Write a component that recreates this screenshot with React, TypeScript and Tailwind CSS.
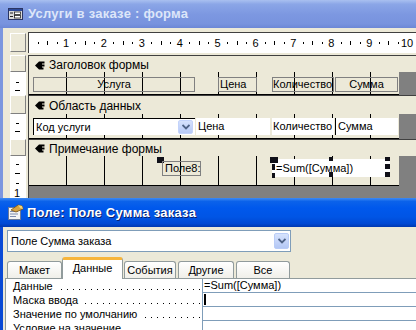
import React from 'react';

const ui = "font-['Liberation_Sans',Arial,sans-serif]";
const CM = 37.9;

function FormIcon() {
  return (
    <svg width="15" height="12" viewBox="0 0 15 12">
      <rect x="0.5" y="0.5" width="14" height="11" fill="#d9d9d9" stroke="#2b3563" />
      <rect x="1" y="1" width="13" height="2" fill="#2c4a9c" />
      <rect x="2" y="4.5" width="3" height="1" fill="#222" />
      <rect x="6.5" y="4" width="6" height="2.5" fill="#fff" stroke="#222" strokeWidth="0.8" />
      <rect x="2" y="8" width="3" height="1" fill="#222" />
      <rect x="6.5" y="7.5" width="6" height="2.5" fill="#fff" stroke="#222" strokeWidth="0.8" />
    </svg>
  );
}

function PropIcon() {
  return (
    <svg width="17" height="17" viewBox="0 0 17 17">
      <rect x="1.5" y="3.5" width="12" height="12" fill="#f4f4f4" stroke="#6b7a99" />
      <rect x="3" y="7" width="8" height="1" fill="#7d8cb0" />
      <rect x="3" y="9.5" width="8" height="1" fill="#7d8cb0" />
      <rect x="3" y="12" width="6" height="1" fill="#7d8cb0" />
      <path d="M4 6 L11 1 L15 2 L16 5 L9 8 Z" fill="#d9a441" stroke="#7a5418" strokeWidth="0.8" />
      <path d="M11 1 L15 2 L16 5 L13 4 Z" fill="#f5d67a" />
    </svg>
  );
}

function BarGlyph() {
  return (
    <svg width="10" height="9" viewBox="0 0 10 9">
      <path d="M0 4.5 L4 0.5 H9.5 V2.5 H7 V3.5 H9.5 V5.5 H7 V6.5 H8.5 V8.5 H4 Z" fill="#000" />
    </svg>
  );
}

function TopRuler() {
  const marks: { x: number; kind: 'dot' | 'line' | 'num'; n?: number }[] = [];
  for (let q = 1; q <= 43; q++) {
    const x = 28.1 + (q * CM) / 4 - 29;
    const r = q % 4;
    if (r === 0) marks.push({ x, kind: 'num', n: q / 4 });
    else if (r === 2) marks.push({ x, kind: 'line' });
    else marks.push({ x, kind: 'dot' });
  }
  return (
    <div className="relative flex-1 h-full bg-white border-t border-[#404040]">
      {marks.map((m, i) =>
        m.kind === 'num' ? (
          <span
            key={i}
            className="absolute top-[5px] -translate-x-1/2 text-[11px] leading-none"
            style={{ left: m.x }}
          >
            {m.n}
          </span>
        ) : m.kind === 'line' ? (
          <span key={i} className="absolute top-[8px] w-px h-[4px] bg-black" style={{ left: m.x }} />
        ) : (
          <span key={i} className="absolute top-[9px] w-px h-[2px] bg-black" style={{ left: m.x }} />
        )
      )}
    </div>
  );
}

type Tick = { y: number; kind: 'dot' | 'line' | 'num' };

function Gutter({ box, ticks = [] }: { box?: boolean; ticks?: Tick[] }) {
  return (
    <div className="w-[26px] shrink-0 self-stretch flex pl-[7px] border-r border-[#404040]">
      {box ? (
        <div className="w-[16px] border border-t-white border-l-white border-r-[#808080] border-b-[#808080] bg-[#ece9d8]" />
      ) : (
        <div className="relative w-[16px] bg-white">
          {ticks.map((t, i) =>
            t.kind === 'num' ? (
              <span key={i} className="absolute left-[4px] text-[11px] leading-none" style={{ top: t.y - 5 }}>
                1
              </span>
            ) : (
              <span
                key={i}
                className={`absolute h-px bg-black ${t.kind === 'dot' ? 'left-[6px] w-[3px]' : 'left-[5px] w-[5px]'}`}
                style={{ top: t.y }}
              />
            )
          )}
        </div>
      )}
    </div>
  );
}

function SectionBar({ title, h, pt }: { title: string; h: string; pt: string }) {
  return (
    <div className={`flex ${h}`}>
      <Gutter box />
      <div className={`flex-1 flex items-center gap-[4px] pl-[6px] border-t border-[#404040] bg-[#ece9d8] ${pt}`}>
        <BarGlyph />
        <span className="text-[12px] leading-none">{title}</span>
      </div>
    </div>
  );
}

const grid =
  'relative w-[370px] h-full bg-[#ece9d8] bg-[repeating-linear-gradient(to_right,transparent_0px,transparent_37px,#000_37px,#000_38px)] border-b border-black';

function Handle({ c }: { c: string }) {
  return <span className={`absolute bg-[#101018] ${c}`} />;
}

function FormWindow() {
  const tick = (a: number): Tick[] => [
    { y: a, kind: 'dot' },
    { y: a + 8, kind: 'line' },
  ];
  return (
    <div className="h-[198px] flex flex-col">
      <div className="h-[28px] shrink-0 flex items-center pl-[8px] gap-[5px] bg-[linear-gradient(to_bottom,#a9c0f0_0%,#8ba6e7_15%,#7d98e1_50%,#7893de_85%,#6c87d6_100%)]">
        <FormIcon />
        <span className="text-[13px] font-bold text-[#dde6f9] tracking-[0.25px]">Услуги в заказе : форма</span>
      </div>
      <div className="flex-1 flex flex-col border-l-[3px] border-[#7b96df] pt-[4px]">
        {/* ruler */}
        <div className="flex h-[21px]">
          <div className="w-[25px] shrink-0 pl-[7px] pt-px">
            <div className="w-[16px] h-[19px] border border-t-white border-l-white border-r-[#808080] border-b-[#808080] bg-[#ece9d8]" />
          </div>
          <div className="w-px bg-[#404040]" />
          <TopRuler />
        </div>
        <div className="h-[2px]" />

        <SectionBar title="Заголовок формы" h="h-[17px]" pt="pt-[2px]" />
        <div className="flex h-[23px]">
          <Gutter ticks={tick(10)} />
          <div className={grid}>
            <div className="absolute left-[4px] top-[5px] w-[162px] h-[15px] border border-[#808080] flex items-center justify-center leading-none">
              Услуга
            </div>
            <div className="absolute left-[189px] top-[5px] w-[39px] h-[15px] border border-[#808080] flex items-center pl-[1px] leading-none">
              Цена
            </div>
            <div className="absolute left-[243px] top-[5px] w-[62px] h-[15px] border border-[#808080] flex items-center leading-none">
              Количество
            </div>
            <div className="absolute left-[306px] top-[5px] w-[63px] h-[15px] border border-[#808080] flex items-center justify-center leading-none">
              Сумма
            </div>
          </div>
          <div className="flex-1 bg-[#808080]" />
        </div>

        <SectionBar title="Область данных" h="h-[19px]" pt="pt-px" />
        <div className="flex h-[25px]">
          <Gutter ticks={tick(9)} />
          <div className={grid}>
            <div className="absolute left-[4px] top-[4px] w-[162px] h-[17px] bg-white border-l border-t border-black flex items-center pl-[2px] leading-none">
              Код услуги
              <span className="absolute right-[2px] top-[1px] w-[15px] h-[14px] rounded-[2px] bg-[linear-gradient(to_bottom,#d5e1fc,#b6c9f6)] border border-[#c3d3fb] flex items-center justify-center">
                <svg width="8" height="6" viewBox="0 0 8 6">
                  <path d="M0.5 1 L4 4.5 L7.5 1" fill="none" stroke="#4d6185" strokeWidth="1.8" />
                </svg>
              </span>
            </div>
            <div className="absolute left-[167px] top-[4px] w-[74px] h-[17px] bg-white flex items-center pl-[2px] leading-none">
              Цена
            </div>
            <div className="absolute left-[243px] top-[4px] w-[62px] h-[17px] bg-white flex items-center pl-px leading-none">
              Количество
            </div>
            <div className="absolute left-[306px] top-[4px] w-[63px] h-[17px] bg-white border-l border-black flex items-center pl-[2px] leading-none">
              Сумма
            </div>
          </div>
          <div className="flex-1 bg-[#808080]" />
        </div>

        <SectionBar title="Примечание формы" h="h-[17px]" pt="pt-px" />
        <div className="flex h-[42px]">
          <Gutter
            ticks={[
              { y: 8, kind: 'dot' },
              { y: 17, kind: 'line' },
              { y: 27, kind: 'dot' },
              { y: 37, kind: 'num' },
            ]}
          />
          <div className="flex-1 flex flex-col">
            <div className="flex h-[30px]">
              <div className={grid}>
                <Handle c="left-[128px] top-px w-[7px] h-[6px]" />
                <div className="absolute left-[133px] top-[5px] w-[39px] h-[15px] border border-[#808080] flex items-center pl-[2px] leading-none">
                  Поле8:
                </div>
                <div className="absolute left-[243px] top-[3px] w-[118px] h-[18px] bg-white flex items-center pl-[4px] leading-none">
                  =Sum([Сумма])
                </div>
                <Handle c="left-[241px] top-px w-[8px] h-[6px]" />
                <Handle c="left-[300px] top-px w-[4px] h-[4px]" />
                <Handle c="left-[356px] top-px w-[5px] h-[4px]" />
                <Handle c="left-[243px] top-[8px] w-[3px] h-[6px]" />
                <Handle c="left-[356px] top-[8px] w-[5px] h-[5px]" />
                <Handle c="left-[243px] top-[17px] w-[3px] h-[5px]" />
                <Handle c="left-[300px] top-[16px] w-[4px] h-[5px]" />
                <Handle c="left-[356px] top-[16px] w-[5px] h-[5px]" />
              </div>
              <div className="flex-1 bg-[#808080]" />
            </div>
            <div className="flex-1 bg-[#808080]" />
          </div>
        </div>
      </div>
    </div>
  );
}

const props = ['Данные', 'Маска ввода', 'Значение по умолчанию', 'Условие на значение'];

function PropertyWindow() {
  const tab =
    'h-[17px] flex items-center justify-center border border-b-0 border-[#919b9c] rounded-t-[3px] bg-[linear-gradient(to_bottom,#ffffff,#f0efe9)] leading-none';
  return (
    <div className="h-[132px] flex flex-col">
      <div className="h-[29px] shrink-0 flex items-center pl-[7px] gap-[3px] bg-[linear-gradient(to_bottom,#3d8af4_0%,#0b62ea_12%,#0058ec_35%,#0055e5_65%,#0049d4_88%,#0038b0_100%)]">
        <PropIcon />
        <span className="text-[13px] font-bold text-white tracking-[0.25px] [text-shadow:1px_1px_0_#0a1f6e]">
          Поле: Поле Сумма заказа
        </span>
      </div>
      <div className="flex-1 flex flex-col border-l-[3px] border-[#0a4ad6] bg-[#ece9d8] pt-[3px]">
        <div className="ml-[4px] w-[284px] h-[22px] shrink-0 bg-white border border-[#7f9db9] flex items-center justify-between pl-[3px] pr-px">
          <span className="leading-none">Поле Сумма заказа</span>
          <span className="w-[15px] h-[16px] rounded-[2px] bg-[linear-gradient(to_bottom,#d7e3fd,#b3c7f5)] border border-[#b9ccf7] flex items-center justify-center">
            <svg width="8" height="6" viewBox="0 0 8 6">
              <path d="M0.5 1 L4 4.5 L7.5 1" fill="none" stroke="#4d6185" strokeWidth="1.8" />
            </svg>
          </span>
        </div>
        <div className="flex items-end h-[21px] mt-[5px] ml-[4px] shrink-0">
          <div className={`${tab} w-[55px]`}>Макет</div>
          <div className="relative z-10 -mb-px w-[61px] h-[22px] flex items-center justify-center pb-[2px] bg-white border-x border-[#919b9c] border-t-[3px] border-t-[#f7b53c] rounded-t-[3px] leading-none">
            Данные
          </div>
          <div className={`${tab} w-[52px] ml-px`}>События</div>
          <div className={`${tab} w-[56px] ml-[2px]`}>Другие</div>
          <div className={`${tab} w-[54px] ml-[2px]`}>Все</div>
        </div>
        <div className="flex-1 ml-[2px] bg-white border-t border-l border-[#919b9c] flex flex-col">
          {props.map((p, i) => (
            <div key={p} className="flex h-[14px] shrink-0">
              <div className="relative w-[196px] shrink-0 pl-[7px] flex items-center">
                <span className="absolute left-[7px] right-[2px] bottom-[3px] h-px bg-[repeating-linear-gradient(to_right,#000_0px,#000_1px,transparent_1px,transparent_6px)]" />
                <span className="relative bg-white pr-[4px] leading-[14px] whitespace-nowrap">{p}</span>
              </div>
              <div className="flex-1 border-l border-b border-[#7f9db9] leading-[13px] pl-px flex items-center">
                {i === 0 && '=Sum([Сумма])'}
                {i === 1 && <span className="w-[2px] h-[11px] bg-black" />}
              </div>
            </div>
          ))}
        </div>
      </div>
    </div>
  );
}

export default function App() {
  return (
    <div className={`w-[416px] h-[330px] overflow-hidden bg-[#ece9d8] text-[11px] text-black ${ui}`}>
      <FormWindow />
      <PropertyWindow />
    </div>
  );
}
